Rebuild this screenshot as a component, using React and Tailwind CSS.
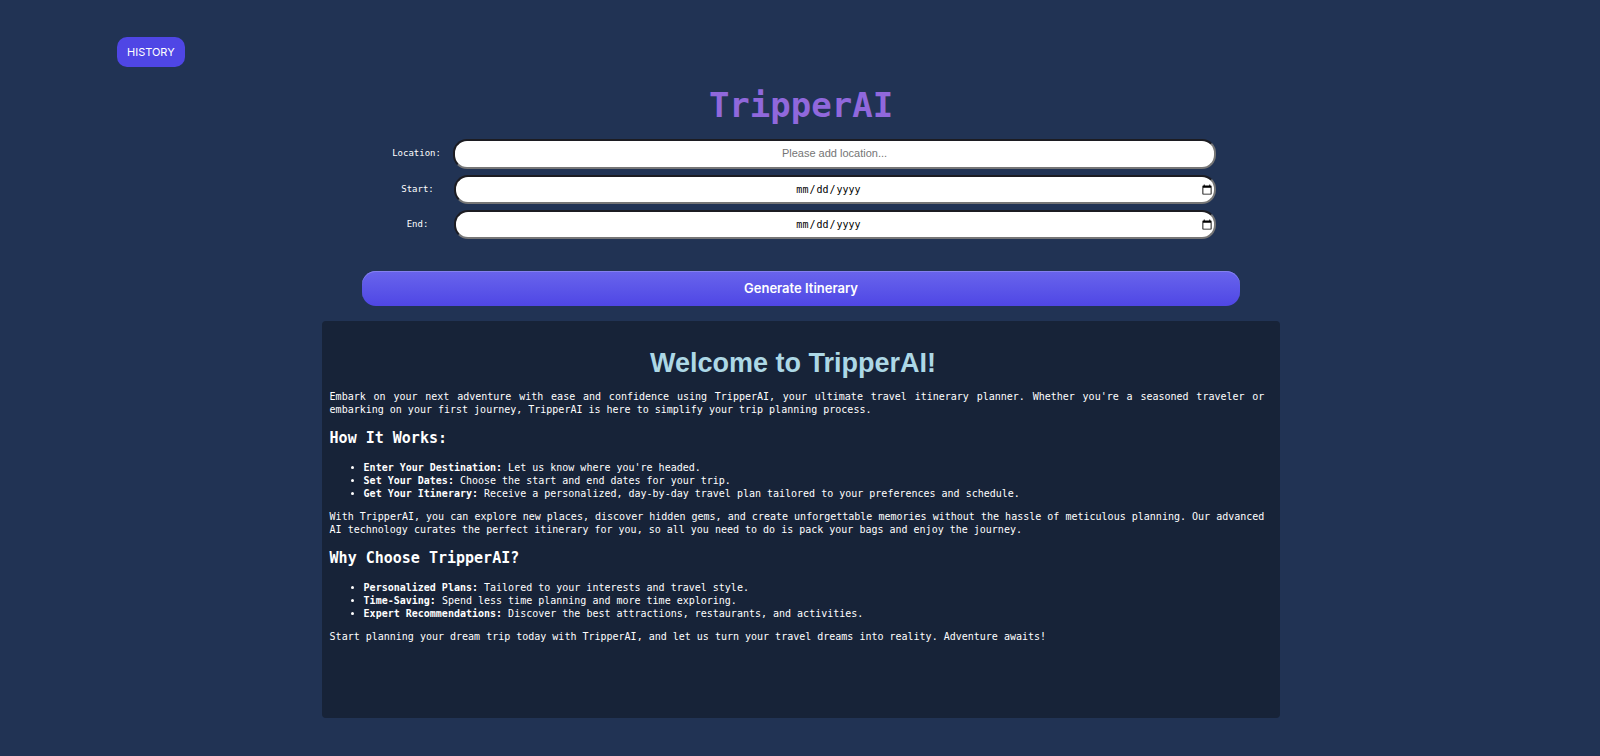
const mono = "font-['DejaVu_Sans_Mono',monospace]";

const steps = [
  ["Enter Your Destination:", "Let us know where you're headed."],
  ["Set Your Dates:", "Choose the start and end dates for your trip."],
  ["Get Your Itinerary:", "Receive a personalized, day-by-day travel plan tailored to your preferences and schedule."],
];

const reasons = [
  ["Personalized Plans:", "Tailored to your interests and travel style."],
  ["Time-Saving:", "Spend less time planning and more time exploring."],
  ["Expert Recommendations:", "Discover the best attractions, restaurants, and activities."],
];

const dateStyle =
  "h-[29px] pr-px text-[10px] [&::-webkit-datetime-edit]:flex-1 [&::-webkit-datetime-edit]:justify-center [&::-webkit-calendar-picker-indicator]:h-3 [&::-webkit-calendar-picker-indicator]:w-3 [&::-webkit-calendar-picker-indicator]:p-0";

function Field({ id, label, type, placeholder, size }) {
  return (
    <div className="flex items-center">
      <label htmlFor={id} className="w-18 shrink-0 text-center text-[9px] text-white">
        {label}
      </label>
      <input
        id={id}
        type={type}
        placeholder={placeholder}
        className={`min-w-0 flex-1 rounded-[14px] border-2 border-t-[#1c1c22] border-l-[#1c1c22] border-r-[#767676] border-b-[#767676] bg-white text-center text-black outline-none placeholder:text-[#757575] ${size}`}
      />
    </div>
  );
}

function BulletList({ items }) {
  return (
    <ul className="mt-[11px] mb-[10px] list-disc pl-[34px]">
      {items.map(([name, text]) => (
        <li key={name}>
          <strong>{name}</strong> {text}
        </li>
      ))}
    </ul>
  );
}

export default function App() {
  return (
    <div className={`min-h-screen bg-[#213354] ${mono}`}>
      <header className="px-[117px] pt-[37px]">
        <button
          type="button"
          className="h-[30px] rounded-[10px] bg-[#4f46e5] px-[10px] font-['Inter',sans-serif] text-[11px] text-white"
        >
          HISTORY
        </button>
      </header>
      <main className="flex flex-col items-center pb-[38px] pl-0.5">
        <h1 className="mt-4 text-[34px] leading-[44px] font-bold text-[#9068dc]">TripperAI</h1>
        <form className="mt-3 flex w-[55%] flex-col" onSubmit={(e) => e.preventDefault()}>
          <div className="flex flex-col gap-[6px] pr-6 pl-[19px]">
            <Field
              id="location"
              label="Location:"
              type="text"
              placeholder="Please add location..."
              size="h-[30px] pb-0.5 font-['Liberation_Sans',sans-serif] text-[11px]"
            />
            <div className="flex flex-col gap-[6px] pl-px">
              <Field id="start" label="Start:" type="date" size={dateStyle} />
              <Field id="end" label="End:" type="date" size={dateStyle} />
            </div>
          </div>
          <button
            type="submit"
            className="mt-8 h-[35px] rounded-[14px] bg-linear-to-b from-[#6964ec] to-[#4f46e5] pt-px font-['Inter',sans-serif] text-[13px] font-semibold text-white shadow-[inset_0_1px_0_#8480f0]"
          >
            Generate Itinerary
          </button>
        </form>
        <section className="mt-[15px] min-h-[397px] w-[60%] rounded-[4px] bg-[#172338] pt-[26px] pr-4 pl-2 text-[10px] leading-[13px] text-white">
          <h2 className="pr-2 text-center font-['Liberation_Sans',sans-serif] text-[27px] leading-8 font-bold text-[#add8e6]">
            Welcome to TripperAI!
          </h2>
          <p className="mt-[11px] text-justify">
            Embark on your next adventure with ease and confidence using TripperAI, your ultimate travel itinerary
            planner. Whether you're a seasoned traveler or embarking on your first journey, TripperAI is here to
            simplify your trip planning process.
          </p>
          <h3 className="mt-3 mb-[13px] text-[15px] leading-5 font-bold">How It Works:</h3>
          <BulletList items={steps} />
          <p className="text-justify">
            With TripperAI, you can explore new places, discover hidden gems, and create unforgettable memories
            without the hassle of meticulous planning. Our advanced AI technology curates the perfect itinerary for
            you, so all you need to do is pack your bags and enjoy the journey.
          </p>
          <h3 className="mt-3 mb-[13px] text-[15px] leading-5 font-bold">Why Choose TripperAI?</h3>
          <BulletList items={reasons} />
          <p className="text-justify">
            Start planning your dream trip today with TripperAI, and let us turn your travel dreams into reality.
            Adventure awaits!
          </p>
        </section>
      </main>
    </div>
  );
}
